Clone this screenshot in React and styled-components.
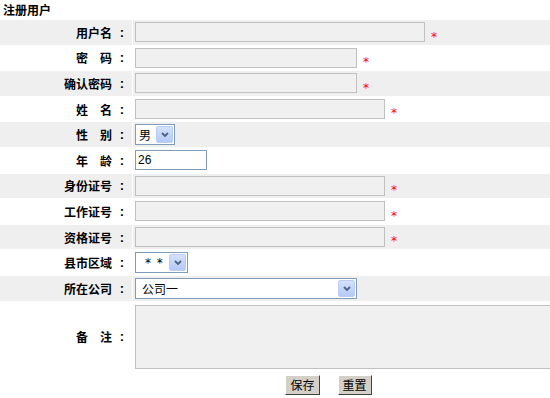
import React from "react";
import styled, { createGlobalStyle } from "styled-components";

const GlobalStyle = createGlobalStyle`
  body {
    margin: 0;
    background: #fff;
    overflow: hidden;
    font-family: "Noto Sans CJK SC", "Liberation Sans", sans-serif;
    font-size: 12px;
    color: #000;
  }
`;

// 입력 행 정의
const rows = [
  { label: "用户名", kind: "input", width: 290, required: true, shade: true },
  { label: "密　码", kind: "input", width: 222, required: true },
  { label: "确认密码", kind: "input", width: 222, required: true, shade: true },
  { label: "姓　名", kind: "input", width: 250, required: true },
  { label: "性　别", kind: "select", width: 40, value: "男", pad: 2, shade: true },
  { label: "年　龄", kind: "text", width: 72, value: "26" },
  { label: "身份证号", kind: "input", width: 250, required: true, shade: true },
  { label: "工作证号", kind: "input", width: 250, required: true },
  { label: "资格证号", kind: "input", width: 250, required: true, shade: true },
  { label: "县市区域", kind: "select", width: 53, value: "* *", pad: 8, stars: true },
  { label: "所在公司", kind: "select", width: 222, value: "公司一", pad: 5, shade: true },
];

const Chevron = () => (
  <svg width="8" height="5" viewBox="0 0 8 5">
    <polyline points="1,1 4,4 7,1" fill="none" stroke="#4d6185" strokeWidth="1.8" />
  </svg>
);

const Field = ({ row }) => {
  if (row.kind === "select") {
    return (
      <SelectBox $w={row.width}>
        <SelectText $pad={row.pad} $stars={row.stars}>
          {row.value}
        </SelectText>
        <DropBtn>
          <Chevron />
        </DropBtn>
      </SelectBox>
    );
  }
  if (row.kind === "text") {
    return <TextBox $w={row.width} defaultValue={row.value} />;
  }
  return (
    <>
      <GrayInput $w={row.width} disabled />
      {row.required && <Required>*</Required>}
    </>
  );
};

const App = () => {
  return (
    <>
      <GlobalStyle />
      <Page>
        <Title>注册用户</Title>
        <Form>
          {rows.map((row) => (
            <Row key={row.label}>
              <LabelCell $shade={row.shade}>
                {row.label}
                <Colon>:</Colon>
              </LabelCell>
              <FieldCell $shade={row.shade}>
                <Field row={row} />
              </FieldCell>
            </Row>
          ))}
          <Row>
            <LabelCell $tall>
              备　注<Colon>:</Colon>
            </LabelCell>
            <FieldCell $tall>
              <Memo />
            </FieldCell>
          </Row>
        </Form>
        <Buttons>
          <Button>保存</Button>
          <Button>重置</Button>
        </Buttons>
      </Page>
    </>
  );
};

export default App;

const Page = styled.div`
  width: 657px;
`;

const Title = styled.div`
  height: 19px;
  display: flex;
  align-items: center;
  padding-left: 3px;
  font-weight: bold;
  margin-bottom: 1px;
`;

const Form = styled.div`
  display: flex;
  flex-direction: column;
  gap: 1px;
  background: #fff;
`;

const Row = styled.div`
  display: grid;
  grid-template-columns: 132px 1fr;
  column-gap: 1px;
`;

const LabelCell = styled.div`
  height: ${(props) => (props.$tall ? "70px" : "24.6px")};
  display: flex;
  align-items: center;
  justify-content: flex-end;
  padding-right: 8px;
  font-weight: bold;
  white-space: nowrap;
  background: ${(props) => (props.$shade ? "#efefef" : "#fff")};
`;

const Colon = styled.span`
  width: 12px;
  text-align: right;
  font-family: "Liberation Sans", sans-serif;
  font-size: 13px;
  font-weight: bold;
`;

const FieldCell = styled.div`
  height: ${(props) => (props.$tall ? "70px" : "24.6px")};
  display: flex;
  align-items: center;
  padding-left: 2px;
  background: ${(props) => (props.$shade ? "#efefef" : "#fff")};
`;

const GrayInput = styled.input`
  width: ${(props) => props.$w}px;
  height: 20px;
  box-sizing: border-box;
  margin: 0;
  border: 1px solid #c0c0c0;
  background: #f0f0f0;
`;

const Required = styled.span`
  align-self: flex-end;
  margin: 0 0 2px 6px;
  line-height: 12px;
  font-family: "DejaVu Sans", sans-serif;
  font-size: 12px;
  color: #ff0000;
`;

const TextBox = styled.input`
  width: ${(props) => props.$w}px;
  height: 20px;
  box-sizing: border-box;
  margin: 0;
  padding: 0 2px;
  border: 1px solid #7f9db9;
  background: #fff;
  font-family: "Liberation Sans", sans-serif;
  font-size: 12px;
  color: #000;
  outline: none;
`;

const SelectBox = styled.div`
  width: ${(props) => props.$w}px;
  height: 21px;
  box-sizing: border-box;
  display: flex;
  align-items: center;
  padding: 1px;
  border: 1px solid #7f9db9;
  background: #fff;
`;

const SelectText = styled.span`
  flex: 1;
  padding-left: ${(props) => props.$pad}px;
  font-family: ${(props) =>
    props.$stars ? '"DejaVu Sans", sans-serif' : '"Noto Sans CJK SC", sans-serif'};
  letter-spacing: ${(props) => (props.$stars ? "1px" : "0")};
  font-size: 12px;
  white-space: pre;
  overflow: hidden;
`;

const DropBtn = styled.span`
  width: 17px;
  height: 17px;
  box-sizing: border-box;
  display: flex;
  align-items: center;
  justify-content: center;
  border: 1px solid #bccdf5;
  border-radius: 2px;
  background: linear-gradient(#d4e1fd, #b4c9f7);
`;

const Memo = styled.textarea`
  width: 520px;
  height: 64px;
  box-sizing: border-box;
  margin: 0;
  border: 1px solid #c0c0c0;
  background: #f0f0f0;
  resize: none;
`;

const Buttons = styled.div`
  display: flex;
  justify-content: center;
  gap: 18px;
  padding-top: 3px;
`;

const Button = styled.button`
  height: 20px;
  padding: 0 4px;
  margin: 0;
  border: 1px solid;
  border-color: #fff #404040 #404040 #fff;
  background: #d4d0c8;
  font-family: "Noto Sans CJK SC", sans-serif;
  font-size: 12px;
  line-height: 18px;
  color: #000;
`;
